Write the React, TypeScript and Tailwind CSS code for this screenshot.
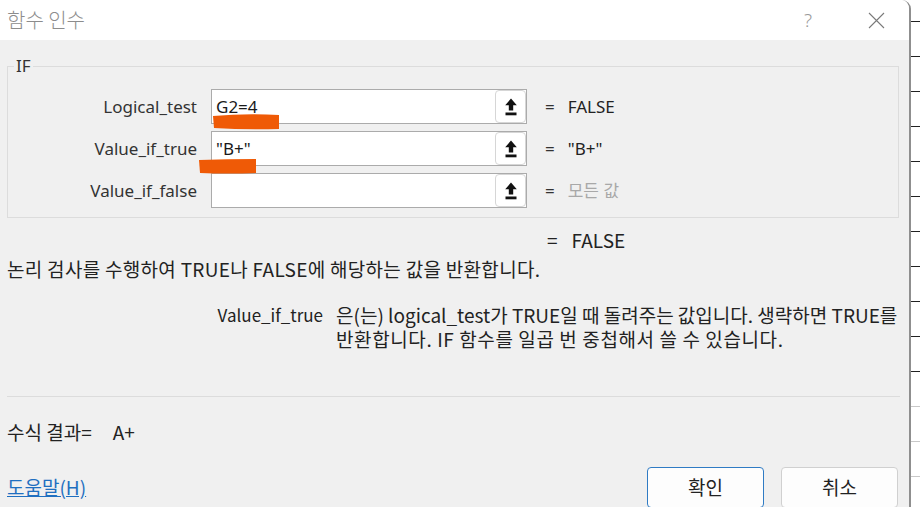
import React from "react";

const rows = [
  { label: "Logical_test", value: "G2=4", result: "FALSE", muted: false },
  { label: "Value_if_true", value: "\"B+\"", result: "\"B+\"", muted: false },
  { label: "Value_if_false", value: "", result: "모든 값", muted: true },
];

function RefIcon() {
  return (
    <svg width="12" height="18" viewBox="0 0 12 18" fill="#111">
      <path d="M6 0.5 L11.8 7.2 H8.2 V12.5 H3.8 V7.2 H0.2 Z" />
      <rect x="0.5" y="14.5" width="11" height="2.8" />
    </svg>
  );
}

function ArgRow({ label, value, result, muted }: (typeof rows)[number]) {
  return (
    <div className="flex h-[35px] items-center">
      <div className="w-[189px] text-right text-[17px] text-[#333]">{label}</div>
      <div className="ml-[14px] flex h-[35px] w-[316px] items-center border border-[#ababab] bg-white">
        <span className="pl-[4px] text-[17px] text-[#1a1a1a]">{value}</span>
        <button className="ml-auto flex h-full w-[31px] items-center justify-center rounded-[4px] border border-[#d6d6d6] bg-white">
          <RefIcon />
        </button>
      </div>
      <span className="ml-[18px] text-[17px] text-[#333]">=</span>
      <span className={`ml-[13px] text-[17px] ${muted ? "text-[#a8a8a8]" : "text-[#222]"}`}>{result}</span>
    </div>
  );
}

function SheetEdge() {
  const black = Array.from({ length: 10 });
  const gray = Array.from({ length: 3 });
  return (
    <div className="flex w-[9px] flex-col bg-white">
      <div className="h-[22px] shrink-0 border-b border-[#222]" />
      {black.map((_, i) => (
        <div key={i} className="h-[35px] shrink-0 border-b border-[#222]" />
      ))}
      {gray.map((_, i) => (
        <div key={i} className="h-[35px] shrink-0 border-b border-[#c8c8c8]" />
      ))}
    </div>
  );
}

export default function App() {
  return (
    <div className="relative flex h-[507px] w-[920px] overflow-hidden bg-white font-['Noto_Sans','Noto_Sans_CJK_KR',sans-serif]">
      <div className="flex h-full w-[911px] shrink-0 flex-col overflow-hidden rounded-tr-[9px] border-r-2 border-[#8f8f8f] bg-[#f0f0f0]">
        {/* title bar */}
        <div className="flex h-[40px] shrink-0 items-center bg-white pl-[7px] pr-[24px]">
          <span className="font-['Noto_Sans_CJK_KR',sans-serif] text-[20px] font-light text-[#8c8c8c]">함수 인수</span>
          <span className="ml-auto text-[19px] font-light text-[#9a9a9a]">?</span>
          <svg className="ml-[56px]" width="17" height="17" viewBox="0 0 17 17" stroke="#7a7a7a" strokeWidth="1.1">
            <path d="M1 1 L16 16 M16 1 L1 16" />
          </svg>
        </div>

        {/* body */}
        <div className="flex flex-1 flex-col px-[7px]">
          <fieldset className="mt-[16px] w-[892px] border border-[#dcdcdc] pb-[9px]">
            <legend className="ml-[6px] px-[2px] text-[17px] leading-[20px] text-[#333]">IF</legend>
            <div className="mt-[13px] flex flex-col gap-[7px]">
              {rows.map((r) => (
                <ArgRow key={r.label} {...r} />
              ))}
            </div>
          </fieldset>

          <div className="font-['Noto_Sans_CJK_KR',sans-serif] text-[19px] leading-[24px] text-[#222]">
            <div className="mt-[10px] pl-[540px]">
              =<span className="ml-[14px]">FALSE</span>
            </div>
            <div className="mt-[5px] whitespace-nowrap tracking-[0.3px]">논리 검사를 수행하여 TRUE나 FALSE에 해당하는 값을 반환합니다.</div>
            <div className="mt-[22px] flex">
              <div className="w-[316px] shrink-0 text-right text-[17px]">Value_if_true</div>
              <div className="ml-[13px] flex flex-col whitespace-nowrap">
                <div className="h-[24px]">은(는) logical_test가 TRUE일 때 돌려주는 값입니다. 생략하면 TRUE를</div>
                <div className="h-[24px] tracking-[0.6px]">반환합니다. IF 함수를 일곱 번 중첩해서 쓸 수 있습니다.</div>
              </div>
            </div>
          </div>

          <div className="mt-[45px] h-px w-[893px] bg-[#dcdcdc]" />

          <div className="mt-[23px] font-['Noto_Sans_CJK_KR',sans-serif] text-[19px] leading-[24px] text-[#222]">
            수식 결과=<span className="ml-[21px]">A+</span>
          </div>

          <div className="mt-[23px] flex items-start">
            <a href="#" className="mt-[8px] font-['Noto_Sans_CJK_KR',sans-serif] text-[19px] leading-[24px] text-[#1f6fc0] underline">
              도움말(H)
            </a>
            <button className="ml-auto h-[41px] w-[117px] rounded-[4px] border border-[#2f7bc4] bg-[#fdfdfd] font-['Noto_Sans_CJK_KR',sans-serif] text-[19px] text-[#222]">
              확인
            </button>
            <button className="ml-[17px] mr-[4px] h-[41px] w-[117px] rounded-[4px] border border-[#d0d0d0] bg-[#fdfdfd] font-['Noto_Sans_CJK_KR',sans-serif] text-[19px] text-[#222]">
              취소
            </button>
          </div>
        </div>
      </div>

      <SheetEdge />

      {/* orange marker strokes drawn over the inputs */}
      <svg className="pointer-events-none absolute left-0 top-0" width="920" height="507" viewBox="0 0 920 507">
        <path d="M213 116 Q246 113 279 115 L279 129 Q246 130 214 128 Z" fill="#ef5a06" />
        <path d="M199 160 Q228 159 256 159 L256 173 Q228 174 200 173 Z" fill="#ef5a06" />
      </svg>
    </div>
  );
}
